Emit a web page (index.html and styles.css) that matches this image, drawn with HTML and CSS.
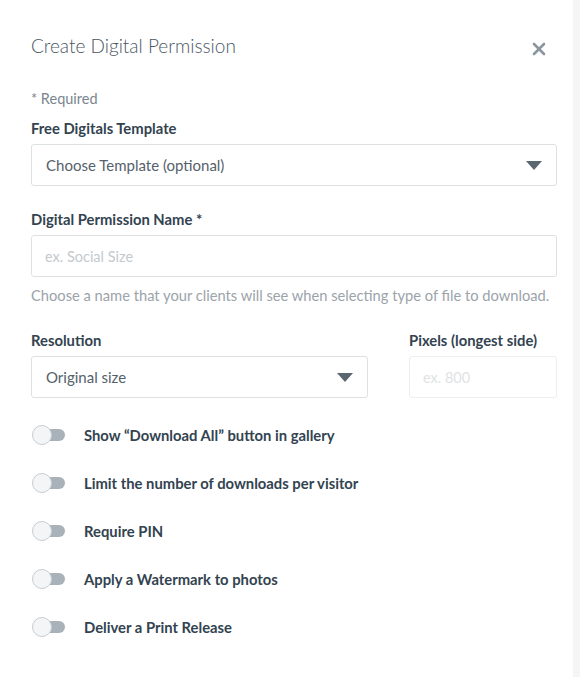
FILE: index.html
```html
<!DOCTYPE html>
<html lang="en">

<head>
    <meta charset="UTF-8">
    <meta name="viewport" content="width=device-width, initial-scale=1.0">
    <title>Create Digital Permission</title>
    <link rel="stylesheet" href="styles.css">
</head>

<body>

    <div class="panel">
        <div class="panel-header">
            <h1>Create Digital Permission</h1>
            <button class="close-btn" aria-label="Close">
                <svg width="14" height="14" viewBox="0 0 14 14">
                    <path d="M2 2 L12 12 M12 2 L2 12" stroke="#8b959d" stroke-width="2.6" stroke-linecap="round" />
                </svg>
            </button>
        </div>

        <p class="required-note">* Required</p>

        <!-- Template -->
        <div class="form-group">
            <label>Free Digitals Template</label>
            <div class="select">
                <span>Choose Template (optional)</span>
                <svg class="caret" width="16" height="9" viewBox="0 0 16 9">
                    <path d="M0 0 H16 L8 9 Z" fill="#5b6770" />
                </svg>
            </div>
        </div>

        <!-- Name -->
        <div class="form-group name-group">
            <label for="permName">Digital Permission Name *</label>
            <input type="text" id="permName" placeholder="ex. Social Size">
            <p class="help">Choose a name that your clients will see when selecting type of file to download.</p>
        </div>

        <!-- Resolution -->
        <div class="resolution-row">
            <div class="form-group">
                <label>Resolution</label>
                <div class="select">
                    <span>Original size</span>
                    <svg class="caret" width="16" height="9" viewBox="0 0 16 9">
                        <path d="M0 0 H16 L8 9 Z" fill="#5b6770" />
                    </svg>
                </div>
            </div>
            <div class="form-group">
                <label for="pixels">Pixels (longest side)</label>
                <input type="text" id="pixels" class="pixels-input" placeholder="ex. 800">
            </div>
        </div>

        <!-- Toggles -->
        <div class="toggle-list">
            <div class="toggle-row">
                <span class="toggle"><span class="knob"></span></span>
                <span class="toggle-label">Show “Download All” button in gallery</span>
            </div>
            <div class="toggle-row">
                <span class="toggle"><span class="knob"></span></span>
                <span class="toggle-label">Limit the number of downloads per visitor</span>
            </div>
            <div class="toggle-row">
                <span class="toggle"><span class="knob"></span></span>
                <span class="toggle-label">Require PIN</span>
            </div>
            <div class="toggle-row">
                <span class="toggle"><span class="knob"></span></span>
                <span class="toggle-label">Apply a Watermark to photos</span>
            </div>
            <div class="toggle-row">
                <span class="toggle"><span class="knob"></span></span>
                <span class="toggle-label">Deliver a Print Release</span>
            </div>
        </div>
    </div>

</body>

</html>
```

FILE: styles.css
```css
/* General Reset */
* {
    margin: 0;
    padding: 0;
    box-sizing: border-box;
}

body {
    font-family: Lato, "Open Sans", sans-serif;
    background-color: #f4f5f6;
    color: #33434f;
}

/* Panel */
.panel {
    width: 573px;
    min-height: 677px;
    background-color: #fff;
    padding: 34px 16px 0 31px;
}

.panel-header {
    display: flex;
    justify-content: space-between;
    align-items: center;
    height: 24px;
}

.panel-header h1 {
    font-size: 19px;
    font-weight: 300;
    line-height: 24px;
    color: #4a5662;
}

.close-btn {
    background: none;
    border: none;
    width: 14px;
    height: 14px;
    margin-top: 5px;
    margin-right: 11px;
    display: flex;
    cursor: pointer;
}

.required-note {
    margin-top: 31px;
    font-size: 14.5px;
    line-height: 20px;
    color: #7a858e;
}

/* Form */
.form-group label {
    display: block;
    font-size: 14.8px;
    font-weight: 700;
    line-height: 20px;
    margin-bottom: 6px;
}

.required-note + .form-group {
    margin-top: 9px;
}

.name-group {
    margin-top: 23px;
}

.select,
.form-group input {
    width: 100%;
    height: 42px;
    border: 1px solid #dde1e4;
    border-radius: 3px;
    background-color: #fff;
    font-family: inherit;
    font-size: 15px;
}

.select {
    display: flex;
    justify-content: space-between;
    align-items: center;
    padding: 0 14px;
    color: #55616b;
}

.caret {
    margin-top: 1px;
}

.form-group input {
    padding: 0 13px;
    font-size: 14.5px;
    color: #33434f;
    outline: none;
}

.form-group input::placeholder {
    color: #c4c9cd;
}

.help {
    margin-top: 8px;
    font-size: 14.7px;
    line-height: 20px;
    color: #9ba3aa;
    white-space: nowrap;
}

/* Resolution row */
.resolution-row {
    display: grid;
    grid-template-columns: 1fr 148px;
    gap: 41px;
    margin-top: 25px;
}

.pixels-input {
    border-color: #eceef0 !important;
}

.pixels-input::placeholder {
    color: #e0e3e5 !important;
}

/* Toggles */
.toggle-list {
    display: flex;
    flex-direction: column;
    gap: 24px;
    margin-top: 25px;
}

.toggle-row {
    display: flex;
    align-items: center;
    height: 24px;
}

.toggle {
    position: relative;
    width: 26px;
    height: 12px;
    margin-left: 8px;
    margin-right: 19px;
    background-color: #a9b2b8;
    border-radius: 6px;
}

.toggle .knob {
    position: absolute;
    left: -7px;
    top: -4px;
    width: 20px;
    height: 20px;
    border-radius: 50%;
    background-color: #f4f5f6;
    border: 1.5px solid #c8cdd1;
}

.toggle-label {
    font-size: 14.8px;
    font-weight: 700;
    color: #33434f;
}
```
